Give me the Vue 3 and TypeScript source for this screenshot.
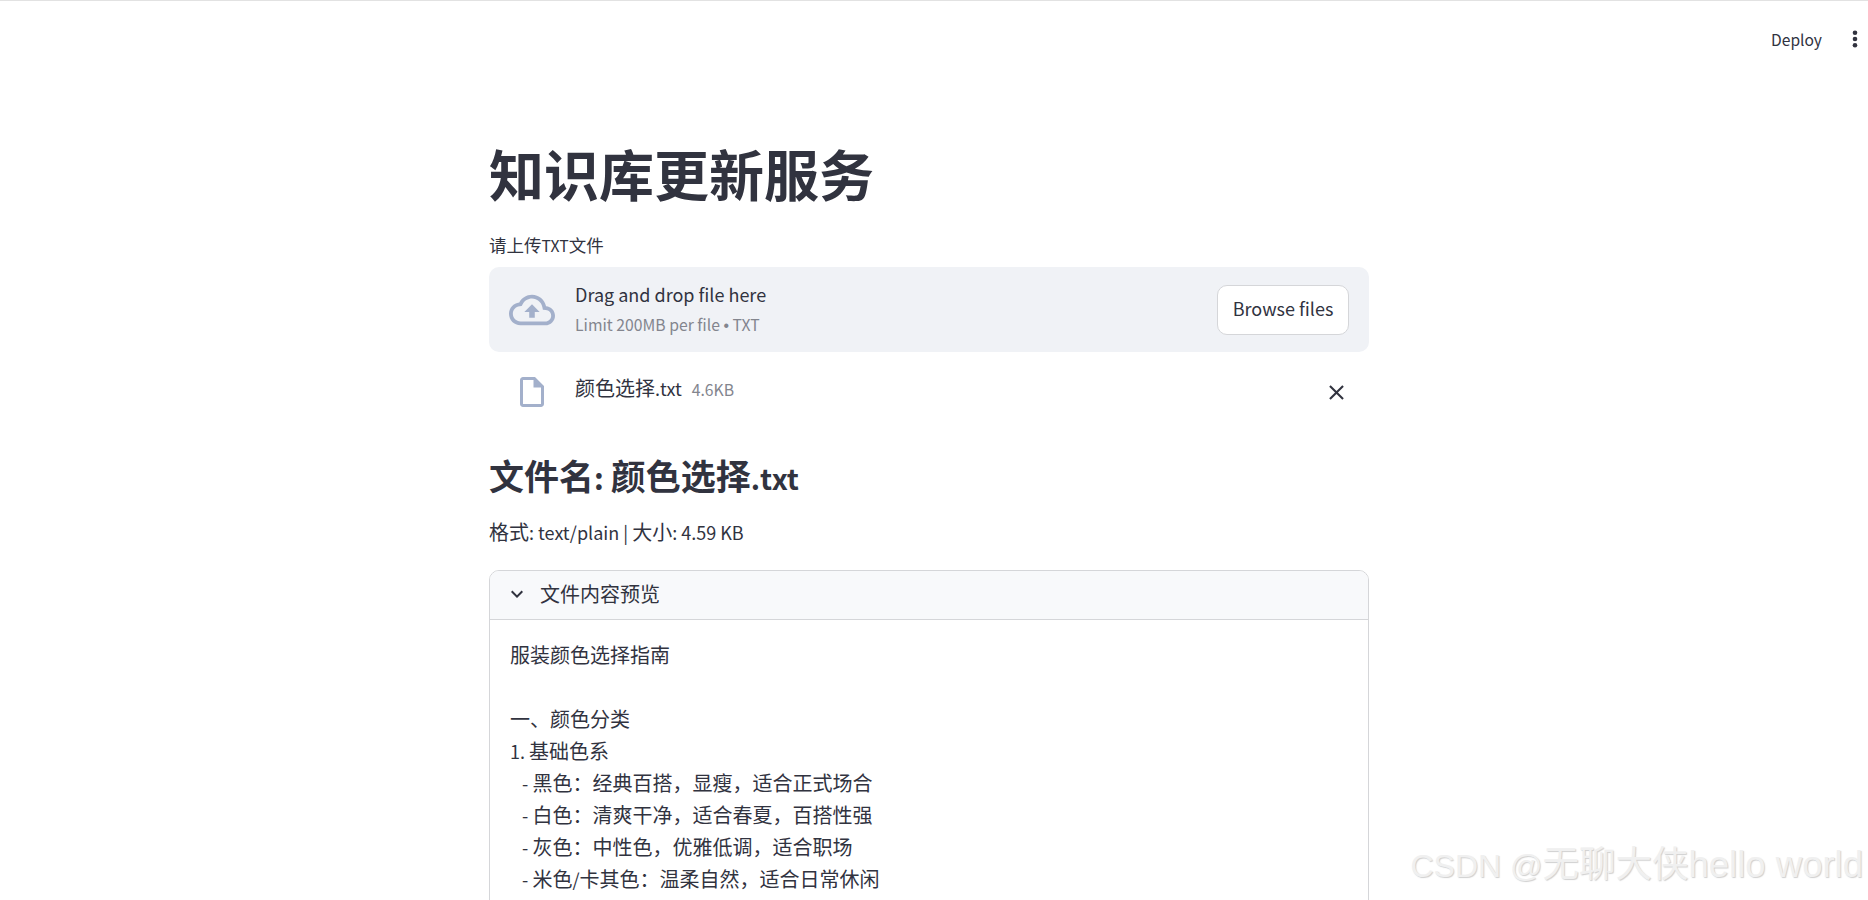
<script setup lang="ts">
interface Seg {
  text: string
  latin: boolean
}

const rawLines: string[] = [
  '服装颜色选择指南',
  '',
  '一、颜色分类',
  '1. 基础色系',
  '   - 黑色：经典百搭，显瘦，适合正式场合',
  '   - 白色：清爽干净，适合春夏，百搭性强',
  '   - 灰色：中性色，优雅低调，适合职场',
  '   - 米色/卡其色：温柔自然，适合日常休闲',
]

// Latin runs are set slightly smaller: the CJK family's Latin glyphs run wide.
function segments(text: string): Seg[] {
  return text
    .split(/([\x00-\x7f]+)/)
    .filter((t) => t.length > 0)
    .map((t) => ({ text: t, latin: /^[\x00-\x7f]+$/.test(t) }))
}

const lines = rawLines.map(segments)
</script>

<template>
  <div class="page">
    <header class="header">
      <span class="deploy">Deploy</span>
      <svg class="dots" viewBox="0 0 6 18" width="6" height="18" aria-hidden="true">
        <circle cx="3" cy="2.7" r="2.3" />
        <circle cx="3" cy="9" r="2.3" />
        <circle cx="3" cy="15.3" r="2.3" />
      </svg>
    </header>

    <main class="main">
      <h1 class="title">知识库更新服务</h1>
      <div class="label">请上传<span class="lat">TXT</span>文件</div>

      <section class="dropzone">
        <svg class="cloud" viewBox="0 0 24 24" width="46" height="46" aria-hidden="true">
          <path d="M19.35 10.04C18.67 6.59 15.64 4 12 4 9.11 4 6.6 5.64 5.35 8.04 2.34 8.36 0 10.91 0 14c0 3.31 2.69 6 6 6h13c2.76 0 5-2.24 5-5 0-2.64-2.05-4.78-4.65-4.96zM19 18H6c-2.21 0-4-1.79-4-4 0-2.05 1.53-3.76 3.56-3.97l1.07-.11.5-.95C8.08 7.14 9.94 6 12 6c2.62 0 4.88 1.86 5.39 4.43l.3 1.5 1.53.11c1.56.1 2.78 1.41 2.78 2.96 0 1.65-1.35 3-3 3zM8 13h2.55v3h2.9v-3H16l-4-4z" />
        </svg>
        <div class="drop-text">
          <div class="drop-main">Drag and drop file here</div>
          <div class="drop-sub">Limit 200MB per file <span class="bullet">•</span> TXT</div>
        </div>
        <button class="browse" type="button">Browse files</button>
      </section>

      <section class="file-row">
        <svg class="file-icon" viewBox="0 0 24 24" width="36" height="36" aria-hidden="true">
          <path d="M14 2H6c-1.1 0-1.99.9-1.99 2L4 20c0 1.1.89 2 1.99 2H18c1.1 0 2-.9 2-2V8l-6-6zM6 20V4h7v5h5v11H6z" />
        </svg>
        <div class="file-info">
          <span class="file-name">颜色选择<span class="lat">.txt</span></span>
          <span class="file-size">4.6KB</span>
        </div>
        <svg class="close" viewBox="0 0 24 24" width="25" height="25" aria-hidden="true">
          <path d="M19 6.41L17.59 5 12 10.59 6.41 5 5 6.41 10.59 12 5 17.59 6.41 19 12 13.41 17.59 19 19 17.59 13.41 12z" />
        </svg>
      </section>

      <h3 class="subtitle">文件名<span class="lat colon">: </span>颜色选择<span class="lat txt">.txt</span></h3>
      <p class="meta">格式<span class="lat">: text/plain | </span>大小<span class="lat">: 4.59 KB</span></p>

      <section class="expander">
        <div class="exp-head">
          <svg class="chevron" viewBox="0 0 24 24" width="24" height="24" aria-hidden="true">
            <path d="M16.59 8.59L12 13.17 7.41 8.59 6 10l6 6 6-6z" />
          </svg>
          <span>文件内容预览</span>
        </div>
        <div class="exp-body">
          <div v-for="(line, i) in lines" :key="i" class="line">
            <span v-for="(seg, j) in line" :key="j" :class="{ lat: seg.latin }">{{ seg.text }}</span>
          </div>
        </div>
      </section>
    </main>

    <div class="watermark">CSDN @<span class="wm-big">无聊大侠hello world</span></div>
  </div>
</template>

<style>
html,
body {
  margin: 0;
  background: #fff;
  overflow: hidden;
}
</style>

<style scoped>
.page {
  position: relative;
  height: 900px;
  overflow: hidden;
  box-sizing: border-box;
  border-top: 1px solid #e2e2e2;
  background: #fff;
  color: #31333f;
  font-family: "Noto Sans CJK SC", "Noto Sans", sans-serif;
  font-size: 20px;
  line-height: 32px;
}
.lat {
  font-size: 0.9em;
  line-height: 0;
}
.header {
  height: 77px;
  display: flex;
  align-items: center;
  justify-content: flex-end;
  padding-right: 10px;
}
.deploy {
  font-size: 15.6px;
  line-height: 22px;
  margin-right: 30px;
  margin-bottom: 2px;
}
.dots {
  fill: #31333f;
  margin-bottom: 2px;
}
.main {
  width: 880px;
  margin-left: 489px;
}
.title {
  margin: 61px 0 0;
  font-size: 55px;
  line-height: 66px;
  font-weight: 700;
}
.label {
  margin-top: 29px;
  font-size: 17.5px;
  line-height: 22px;
}
.dropzone {
  margin-top: 11px;
  height: 85px;
  box-sizing: border-box;
  padding: 0 20px;
  display: flex;
  align-items: center;
  background: #f0f2f6;
  border-radius: 10px;
}
.cloud {
  fill: #a3b0cb;
  flex: none;
}
.drop-text {
  margin-left: 20px;
  flex: 1;
}
.drop-main {
  font-size: 18px;
  line-height: 30px;
  margin-top: -3px;
}
.drop-sub {
  font-size: 15.75px;
  line-height: 24px;
  margin-top: 4px;
  color: #83858e;
}
.bullet {
  font-family: "Liberation Sans", sans-serif;
}
.browse {
  width: 132px;
  height: 50px;
  padding: 0 0 4px;
  box-sizing: border-box;
  background: #fff;
  border: 1px solid #d5d6d9;
  border-radius: 10px;
  color: #31333f;
  font-family: inherit;
  font-size: 18px;
  line-height: 30px;
}
.file-row {
  margin-top: 16px;
  height: 48px;
  padding: 0 20px 0 25px;
  display: flex;
  align-items: center;
}
.file-icon {
  fill: #a3b0cb;
  flex: none;
}
.file-info {
  margin-left: 25px;
  flex: 1;
  padding-bottom: 6px;
  display: flex;
  align-items: baseline;
  gap: 10px;
}
.file-size {
  font-size: 15.75px;
  color: #83858e;
}
.close {
  fill: #31333f;
  flex: none;
}
.subtitle {
  margin: 37px 0 0;
  font-size: 35px;
  line-height: 44px;
  font-weight: 700;
}
.colon {
  font-size: 0.86em;
}
.txt {
  font-size: 0.82em;
}
.meta {
  margin: 19px 0 0;
}
.expander {
  margin-top: 22px;
  border: 1px solid #d5d6d9;
  border-radius: 10px;
  overflow: hidden;
}
.exp-head {
  height: 49px;
  display: flex;
  align-items: center;
  padding-left: 15px;
  padding-bottom: 3px;
  box-sizing: border-box;
  gap: 11px;
  background: #f8f9fb;
  border-bottom: 1px solid #d5d6d9;
}
.chevron {
  fill: #31333f;
  flex: none;
}
.exp-body {
  padding: 19px 20px;
}
.line {
  white-space: pre-wrap;
  height: 32px;
}
.watermark {
  position: absolute;
  right: 5px;
  bottom: 14px;
  font-family: "Liberation Sans", "Noto Sans CJK SC", sans-serif;
  font-size: 32px;
  line-height: 40px;
  white-space: nowrap;
  color: #f0f0f0;
  text-shadow: 1px 1px 1px rgba(120, 120, 120, 0.35), -1px -1px 0 rgba(255, 255, 255, 0.6);
}
.wm-big {
  font-size: 36.5px;
}
</style>
